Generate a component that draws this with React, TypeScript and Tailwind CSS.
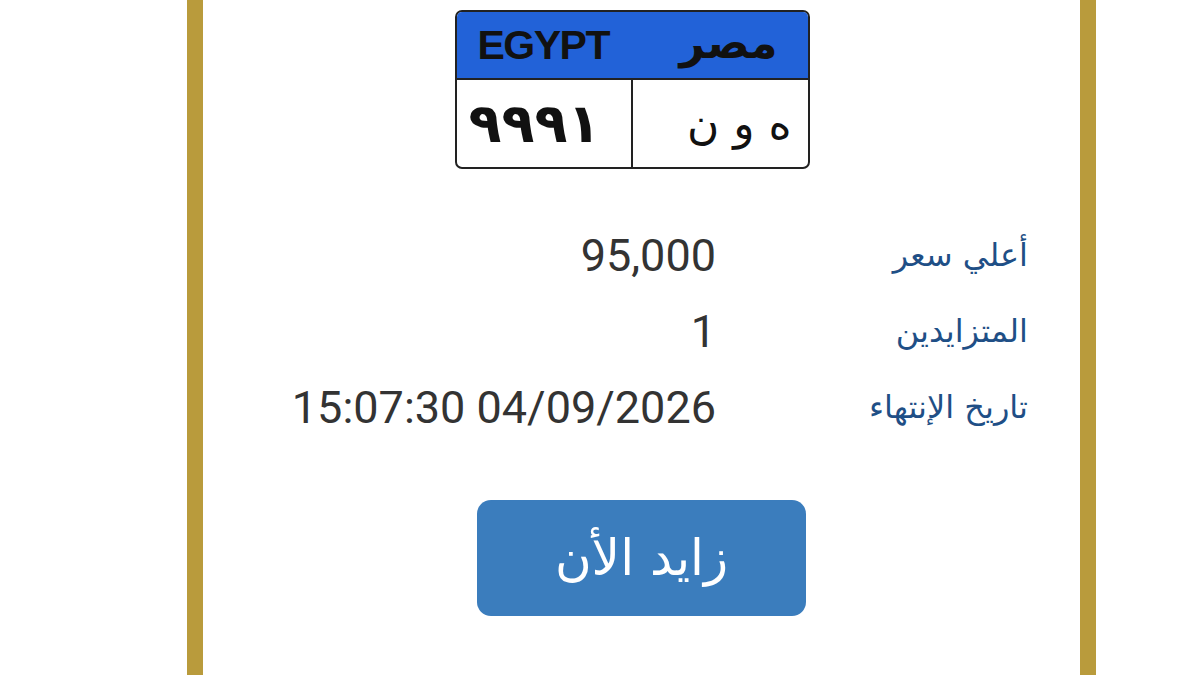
const arabic = "font-['DejaVu_Sans',sans-serif]";

const rows = [
  { label: "أعلي سعر", value: "95,000" },
  { label: "المتزايدين", value: "1" },
  { label: "تاريخ الإنتهاء", value: "15:07:30 04/09/2026" },
];

function Plate() {
  return (
    <div className="w-[355px] h-[159px] rounded-[7px] border-2 border-[#222] bg-white overflow-hidden flex flex-col">
      <div className="h-[68px] bg-[#2262d8] border-b-2 border-[#222] flex items-center justify-between pl-[21px] pr-[30px]">
        <span className="font-['Liberation_Sans',sans-serif] font-bold text-[41px] tracking-[-1.5px] text-[#111] leading-none">
          EGYPT
        </span>
        <span dir="rtl" className={`${arabic} font-bold text-[44px] text-[#111] leading-none pb-1`}>
          مصر
        </span>
      </div>
      <div className="flex-1 flex">
        <div className="w-[176px] border-r-2 border-[#222] flex items-center pl-[12px]">
          <span dir="rtl" className={`${arabic} font-bold text-[54px] text-[#111] leading-none tracking-[1px]`}>
            ٩٩٩١
          </span>
        </div>
        <div className="flex-1 flex items-center justify-end pr-[16px]">
          <span dir="rtl" className={`${arabic} text-[44px] text-[#111] leading-none tracking-[5px]`}>
            ه و ن
          </span>
        </div>
      </div>
    </div>
  );
}

export default function App() {
  return (
    <div className="w-[1200px] h-[675px] bg-white overflow-hidden flex pl-[187px]">
      <div className="w-[909px] h-full border-x-[16px] border-[#b99b3c] flex flex-col items-center">
        <div className="pt-[10px] pr-[19px]">
          <Plate />
        </div>

        <div dir="rtl" className="w-full pr-[52px] mt-[62px] flex flex-col gap-[28px]">
          {rows.map((r) => (
            <div key={r.label} className="flex items-center h-[48px]">
              <div className={`${arabic} w-[312px] text-[32px] text-[#1f4f86] leading-none`}>
                {r.label}
              </div>
              <div dir="ltr" className="font-['Roboto',sans-serif] text-[45px] text-[#333] leading-none">
                {r.value}
              </div>
            </div>
          ))}
        </div>

        <button className="mt-[69px] w-[329px] h-[116px] rounded-[14px] bg-[#3b7dbd] flex items-center justify-center">
          <span dir="rtl" className={`${arabic} text-[50px] text-white leading-none`}>
            زايد الأن
          </span>
        </button>
      </div>
    </div>
  );
}
